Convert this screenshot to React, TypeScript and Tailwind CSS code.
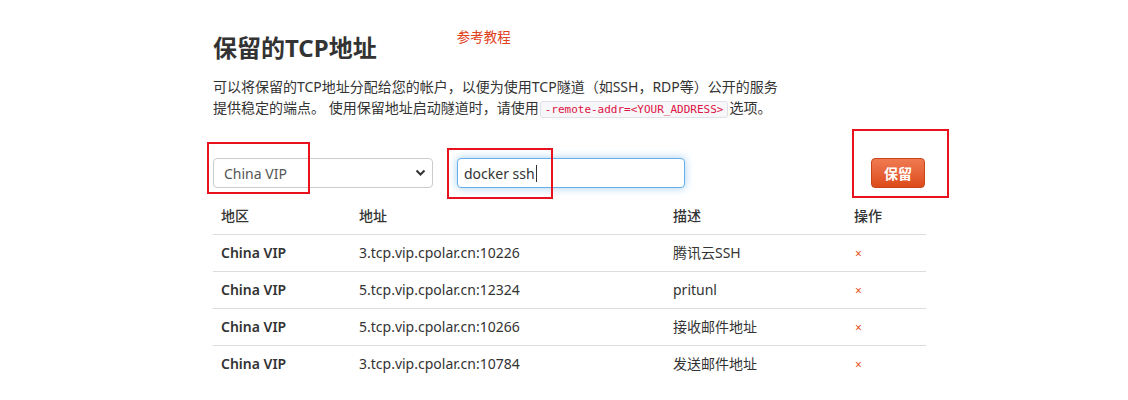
const rows = [
  { region: "China VIP", addr: "3.tcp.vip.cpolar.cn:10226", desc: "腾讯云SSH" },
  { region: "China VIP", addr: "5.tcp.vip.cpolar.cn:12324", desc: "pritunl" },
  { region: "China VIP", addr: "5.tcp.vip.cpolar.cn:10266", desc: "接收邮件地址" },
  { region: "China VIP", addr: "3.tcp.vip.cpolar.cn:10784", desc: "发送邮件地址" },
];

function RedBox({ className }: { className: string }) {
  return <div className={`pointer-events-none absolute border-2 border-[#e8121e] ${className}`} />;
}

export default function App() {
  return (
    <div
      className="relative h-[400px] w-[1128px] overflow-hidden bg-white text-[14px] text-[#333]"
      style={{ fontFamily: '"Noto Sans", "Noto Sans CJK SC", sans-serif' }}
    >
      <div className="ml-[213px] w-[713px] pt-[26px]">
        <div className="flex items-start">
          <h1 className="mt-[4px] text-[24px] font-bold leading-[36px] text-[#333]">保留的TCP地址</h1>
          <a className="ml-[80px] text-[13.5px] leading-[22px] text-[#e0401a]">参考教程</a>
        </div>

        <p className="mt-[10px] h-[42px] w-[600px] text-[14px] leading-[21px] text-[#333]">
          可以将保留的TCP地址分配给您的帐户，以便为使用TCP隧道（如SSH，RDP等）公开的服务
          <br />
          提供稳定的端点。 使用保留地址启动隧道时，请使用
          <code
            className="mx-[1px] rounded-[3px] border border-[#e1e1e8] bg-[#f7f7f9] px-[4px] py-[1px] text-[11px] leading-none text-[#dd1144]"
            style={{ fontFamily: '"DejaVu Sans Mono", monospace' }}
          >
            -remote-addr=&lt;YOUR_ADDRESS&gt;
          </code>
          选项。
        </p>

        <div className="mt-[40px] flex items-center">
          <div className="relative h-[30px] w-[220px]">
            <select className="h-full w-full appearance-none rounded-[4px] border border-[#ccc] bg-white pl-[10px] text-[14px] text-[#555] outline-none">
              <option>China VIP</option>
            </select>
            <svg
              className="pointer-events-none absolute right-[7px] top-[10px]"
              width="11"
              height="9"
              viewBox="0 0 11 9"
            >
              <path d="M1.5 2.5 L5.5 6.5 L9.5 2.5" fill="none" stroke="#333" strokeWidth="2" />
            </svg>
          </div>
          <div className="ml-[24px] flex h-[30px] w-[228px] items-center rounded-[4px] border border-[#66afe9] bg-white pl-[6px] shadow-[0_0_8px_rgba(102,175,233,0.6)]">
            <span className="text-[14px] text-[#333]">docker ssh</span>
            <span className="ml-[1px] h-[17px] w-px bg-[#333]" />
          </div>
          <button className="ml-auto mr-[1px] h-[30px] w-[54px] rounded-[4px] border border-[#c9441b] bg-gradient-to-b from-[#f07a50] to-[#dc4a18] text-[14px] font-bold text-white">
            保留
          </button>
        </div>

        <table className="mt-[9px] w-full border-collapse text-left">
          <thead>
            <tr className="border-b border-[#ddd]">
              <th className="h-[37px] w-[146px] pl-[8px] font-medium">地区</th>
              <th className="w-[314px] pl-[0px] font-medium">地址</th>
              <th className="w-[181px] font-medium">描述</th>
              <th className="font-medium">操作</th>
            </tr>
          </thead>
          <tbody>
            {rows.map((r) => (
              <tr key={r.addr} className="border-b border-[#ddd] last:border-b-0">
                <td className="h-[37px] pl-[8px] font-semibold">{r.region}</td>
                <td>{r.addr}</td>
                <td>{r.desc}</td>
                <td>
                  <span className="ml-[1px] text-[12px] text-[#e8501c]">×</span>
                </td>
              </tr>
            ))}
          </tbody>
        </table>
      </div>

      <RedBox className="left-[207px] top-[142px] h-[52px] w-[103px]" />
      <RedBox className="left-[447px] top-[148px] h-[51px] w-[106px]" />
      <RedBox className="left-[852px] top-[129px] h-[69px] w-[97px]" />
    </div>
  );
}
